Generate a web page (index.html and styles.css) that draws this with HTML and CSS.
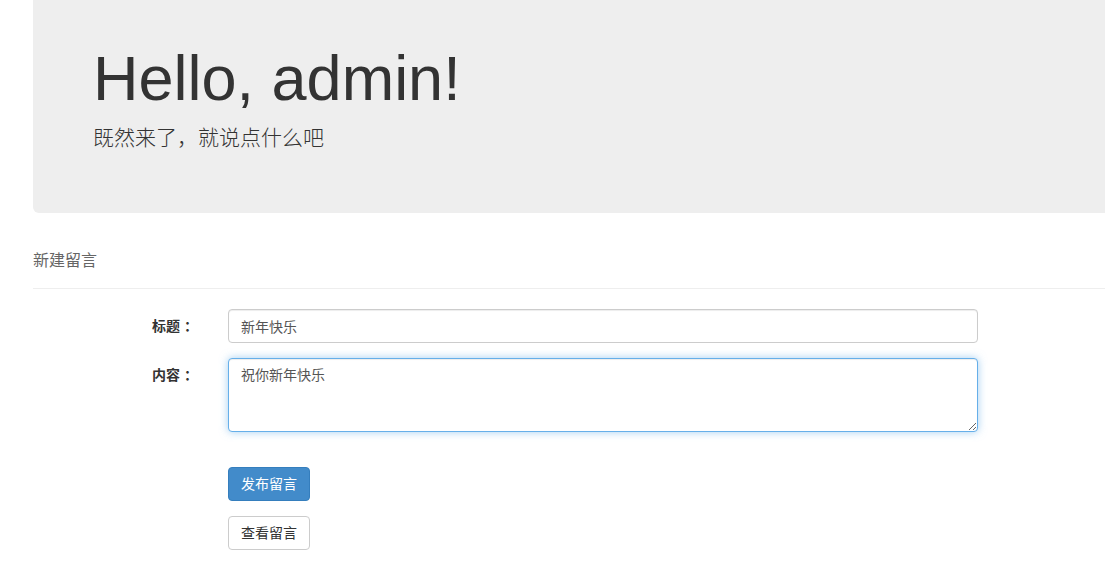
FILE: index.html
```html
<!DOCTYPE html>
<html lang="zh-CN">
<head>
<meta charset="utf-8">
<title>留言板</title>
<link rel="stylesheet" href="styles.css">
</head>
<body>
<div class="page">
  <div class="jumbotron">
    <h1 class="jumbo-title">Hello, admin!</h1>
    <p class="jumbo-sub">既然来了，就说点什么吧</p>
  </div>
  <div class="section-head">新建留言</div>
  <form class="msg-form">
    <label class="form-label">标题 ：</label>
    <input class="form-input" type="text" value="新年快乐">
    <label class="form-label">内容 ：</label>
    <textarea class="form-input form-textarea is-focus" rows="3">祝你新年快乐</textarea>
    <div class="form-actions">
      <button type="button" class="btn btn-primary">发布留言</button>
      <button type="button" class="btn btn-default">查看留言</button>
    </div>
  </form>
</div>
</body>
</html>
```

FILE: styles.css
```css
* { box-sizing: border-box; }
html, body { margin: 0; padding: 0; overflow: hidden; }
body {
  font-family: "Liberation Sans", "Noto Sans CJK SC", sans-serif;
  font-size: 14px;
  line-height: 1.42857;
  color: #333;
  background: #fff;
}
.page {
  padding-left: 33px;
}
.jumbotron {
  height: 213px;
  background: #eee;
  border-radius: 0 0 0 6px;
  padding: 24px 60px 0 60px;
}
.jumbo-title {
  margin: 20px 0 10px;
  font-size: 63px;
  line-height: 1.1;
  font-weight: 400;
  color: #333;
}
.jumbo-sub {
  margin: 0;
  font-size: 21px;
  line-height: 30px;
  font-weight: 300;
  color: #333;
}
.section-head {
  margin-top: 36px;
  font-size: 16px;
  line-height: 24px;
  color: #666;
  padding-bottom: 15px;
  border-bottom: 1px solid #eee;
}
.msg-form {
  display: grid;
  grid-template-columns: 180px 750px;
  column-gap: 15px;
  row-gap: 15px;
  margin-top: 20px;
  align-items: start;
}
.form-label {
  text-align: right;
  padding: 7px 15px 0 0;
  font-weight: bold;
  line-height: 20px;
  font-size: 14px;
}
.form-input {
  display: block;
  width: 750px;
  height: 34px;
  margin: 0;
  padding: 6px 12px;
  font-family: inherit;
  font-size: 14px;
  line-height: 20px;
  color: #555;
  background: #fff;
  border: 1px solid #ccc;
  border-radius: 4px;
  box-shadow: inset 0 1px 1px rgba(0,0,0,.075);
  outline: none;
}
.form-textarea {
  height: 74px;
  resize: vertical;
}
.is-focus {
  border-color: #66afe9;
  box-shadow: inset 0 1px 1px rgba(0,0,0,.075), 0 0 8px rgba(102,175,233,.6);
}
.form-actions {
  grid-column: 2;
  margin-top: 20px;
  display: flex;
  flex-direction: column;
  align-items: flex-start;
  gap: 15px;
}
.btn {
  height: 34px;
  padding: 6px 12px;
  font-family: inherit;
  font-size: 14px;
  line-height: 20px;
  border: 1px solid transparent;
  border-radius: 4px;
  cursor: pointer;
}
.btn-primary {
  color: #fff;
  background: #428bca;
  border-color: #357ebd;
}
.btn-default {
  color: #333;
  background: #fff;
  border-color: #ccc;
}
```
